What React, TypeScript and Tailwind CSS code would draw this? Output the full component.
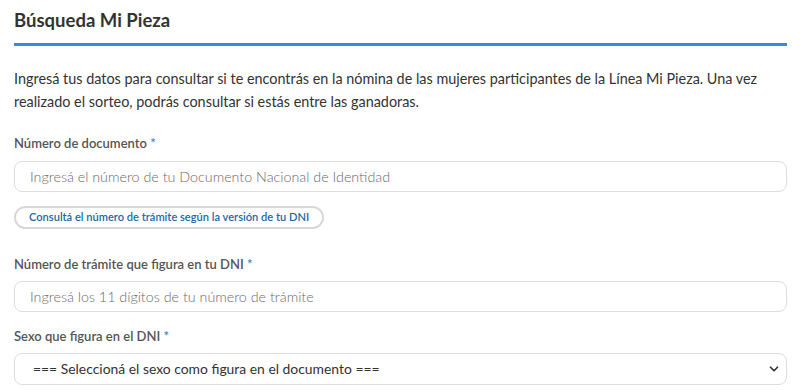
import { ChevronDown } from 'lucide-react';

const font = { fontFamily: 'Lato, "Noto Sans", sans-serif' };

function Label({ text }: { text: string }) {
  return (
    <label className="block text-[13px] leading-[18px] font-semibold text-[#555]">
      {text} <span className="text-[#3a85c9]">*</span>
    </label>
  );
}

export default function App() {
  return (
    <div className="w-[800px] h-[390px] overflow-hidden bg-white pl-[14px] pr-[13px] text-[#333]" style={font}>
      {/* Title */}
      <h1 className="pt-[8px] text-[18.5px] leading-[24px] font-bold text-[#333]">Búsqueda Mi Pieza</h1>
      <div className="mt-[11px] h-[3px] bg-[#3589db]" />

      {/* Intro */}
      <p className="mt-[21px] text-[14.4px] leading-[23px] text-[#333]">
        Ingresá tus datos para consultar si te encontrás en la nómina de las mujeres participantes de la Línea Mi Pieza. Una vez realizado el sorteo, podrás consultar si estás entre las ganadoras.
      </p>

      {/* DNI */}
      <div className="mt-[21px]">
        <Label text="Número de documento" />
        <input
          className="mt-[9px] w-full h-[31px] rounded-[8px] border border-[#ddd] px-[15px] text-[14.3px] placeholder:text-[#6a6a6a] placeholder:font-light outline-none"
          placeholder="Ingresá el número de tu Documento Nacional de Identidad"
        />
      </div>

      <button className="mt-[14px] h-[23px] rounded-full border-2 border-[#d8d8d8] px-[13px] text-[11.1px] font-semibold text-[#2368a6]">
        Consultá el número de trámite según la versión de tu DNI
      </button>

      {/* Trámite */}
      <div className="mt-[26px]">
        <Label text="Número de trámite que figura en tu DNI" />
        <input
          className="mt-[8px] w-full h-[31px] rounded-[8px] border border-[#ddd] px-[15px] text-[14.3px] placeholder:text-[#6a6a6a] placeholder:font-light outline-none"
          placeholder="Ingresá los 11 dígitos de tu número de trámite"
        />
      </div>

      {/* Sexo */}
      <div className="mt-[15px]">
        <Label text="Sexo que figura en el DNI" />
        <div className="relative mt-[8px]">
          <select className="w-full h-[32px] appearance-none rounded-[8px] border border-[#ddd] bg-white pl-[18px] text-[13.9px] text-[#333] outline-none">
            <option>=== Seleccioná el sexo como figura en el documento ===</option>
          </select>
          <ChevronDown size={14} strokeWidth={3} className="pointer-events-none absolute right-[6px] top-[9px] text-[#333]" />
        </div>
      </div>
    </div>
  );
}
